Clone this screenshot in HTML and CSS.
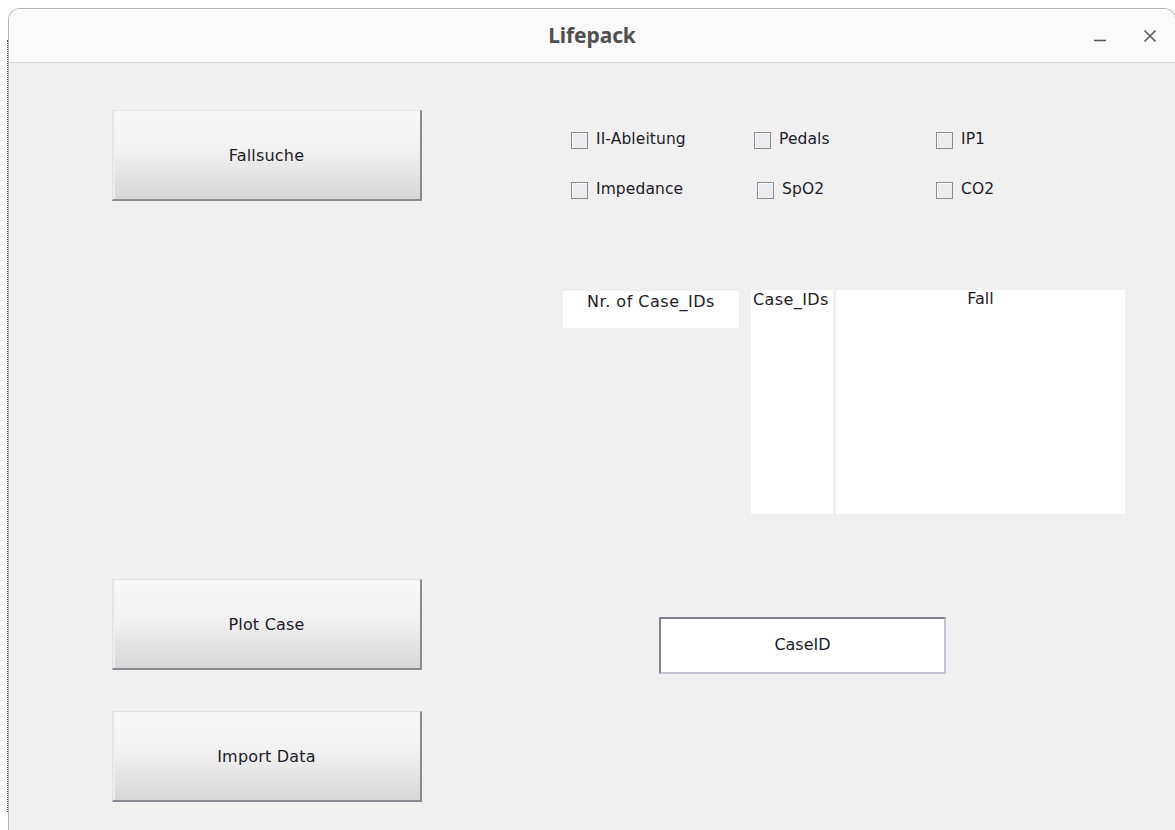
FILE: index.html
```html
<!DOCTYPE html>
<html lang="de">
<head>
<meta charset="utf-8">
<title>Lifepack</title>
<link rel="stylesheet" href="styles.css">
</head>
<body>
<div class="window">
  <header class="titlebar">
    <span class="title">Lifepack</span>
    <div class="controls">
      <button class="ctl" aria-label="Minimieren">
        <svg width="14" height="14" viewBox="0 0 14 14"><path d="M1 11.5h12" stroke="#5e5e5e" stroke-width="1.6"/></svg>
      </button>
      <button class="ctl" aria-label="Schließen">
        <svg width="14" height="14" viewBox="0 0 14 14"><path d="M1.5 1.5l11 11M12.5 1.5l-11 11" stroke="#5e5e5e" stroke-width="1.7"/></svg>
      </button>
    </div>
  </header>

  <main class="content">
    <div class="left">
      <button class="btn">Fallsuche</button>
      <button class="btn btn-plot">Plot Case</button>
      <button class="btn btn-import">Import Data</button>
    </div>

    <div class="right">
      <div class="checks">
        <label class="check"><span class="box"></span><span class="txt">II-Ableitung</span></label>
        <label class="check"><span class="box"></span><span class="txt">Pedals</span></label>
        <label class="check"><span class="box"></span><span class="txt">IP1</span></label>
        <label class="check"><span class="box"></span><span class="txt">Impedance</span></label>
        <label class="check shift"><span class="box"></span><span class="txt">SpO2</span></label>
        <label class="check"><span class="box"></span><span class="txt">CO2</span></label>
      </div>

      <div class="tables">
        <div class="count">Nr. of Case_IDs</div>
        <div class="ids">Case_IDs</div>
        <div class="fall">Fall</div>
      </div>

      <div class="caseid">CaseID</div>
    </div>
  </main>
</div>
</body>
</html>
```

FILE: styles.css
```css
* { box-sizing: border-box; }

html, body {
  margin: 0;
  height: 100%;
  background: #ffffff;
  overflow: hidden;
}

body {
  padding: 8px 0 0 8px;
  font-family: "DejaVu Sans", "Liberation Sans", sans-serif;
  font-size: 16px;
  color: #1c1c28;
}

.window {
  position: relative;
  width: 1168px;
  height: 840px;
  background: #f0f0f0;
  border: 1px solid #b4b4b4;
  border-bottom: none;
  border-radius: 12px 12px 0 0;
}

/* dotted focus edge running down the left side of the frame */
.window::before {
  content: "";
  position: absolute;
  left: -2px;
  top: 31px;
  height: 772px;
  border-left: 1px dotted #444;
}

.titlebar {
  height: 54px;
  background: #fafafa;
  border-bottom: 1px solid #dadada;
  border-radius: 11px 11px 0 0;
  display: flex;
  align-items: center;
  justify-content: center;
  position: relative;
}

.title {
  font-family: "Noto Sans", "Open Sans", sans-serif;
  font-weight: 700;
  font-size: 21px;
  color: #505050;
  letter-spacing: -0.1px;
  margin-top: -2px;
}

.controls {
  position: absolute;
  right: 12px;
  top: 14px;
  display: flex;
  gap: 24px;
}

.ctl {
  width: 26px;
  height: 26px;
  padding: 0;
  border: none;
  background: none;
  display: flex;
  align-items: center;
  justify-content: center;
}

.content {
  display: flex;
  padding-left: 103px;
}

.left {
  display: flex;
  flex-direction: column;
  padding-top: 47px;
  width: 310px;
}

.btn {
  width: 310px;
  height: 91px;
  font: inherit;
  color: #1c1c28;
  letter-spacing: 0.2px;
  background: linear-gradient(to bottom, #f8f8f8 0%, #f1f1f1 45%, #d7d7d7 100%);
  border: 1px solid #e0e0e8;
  border-right: 2px solid #8a8a92;
  border-bottom: 2px solid #8a8a92;
  box-shadow: inset 2px 0 0 #ececf2;
  padding: 0;
}

.btn-plot { margin-top: 378px; }
.btn-import { margin-top: 41px; }

.right {
  margin-left: 141px;
  width: 562px;
  display: flex;
  flex-direction: column;
}

.checks {
  display: grid;
  grid-template-columns: 183px 182px auto;
  row-gap: 33px;
  padding: 69px 0 0 8px;
}

.check {
  display: flex;
  align-items: center;
  height: 17px;
  gap: 8px;
  font-size: 15.5px;
  letter-spacing: 0.1px;
  white-space: nowrap;
}

.check .txt { margin-top: -3px; }

.check.shift { margin-left: 3px; }

.box {
  width: 17px;
  height: 17px;
  flex: none;
  border: 1px solid #8c8c8c;
  background: #ececf0;
  box-shadow: inset 1px 1px 0 #ffffff;
}

.tables {
  display: flex;
  align-items: flex-start;
  margin-top: 91px;
  line-height: 18px;
}

.count {
  width: 176px;
  height: 37px;
  margin-top: 1px;
  background: #ffffff;
  text-align: center;
  padding-top: 2px;
  letter-spacing: 0.5px;
}

.ids {
  width: 82px;
  height: 224px;
  margin-left: 12px;
  background: #ffffff;
  padding: 1px 0 0 2px;
  letter-spacing: 0.4px;
}

.fall {
  width: 289px;
  height: 224px;
  margin-left: 3px;
  background: #ffffff;
  text-align: center;
  padding-top: 0;
}

.caseid {
  width: 287px;
  height: 57px;
  margin: 103px 0 0 96px;
  background: #ffffff;
  border: 2px solid;
  border-color: #808090 #c4c4d2 #c4c4d2 #808090;
  display: flex;
  align-items: center;
  justify-content: center;
  padding-bottom: 2px;
}
```
